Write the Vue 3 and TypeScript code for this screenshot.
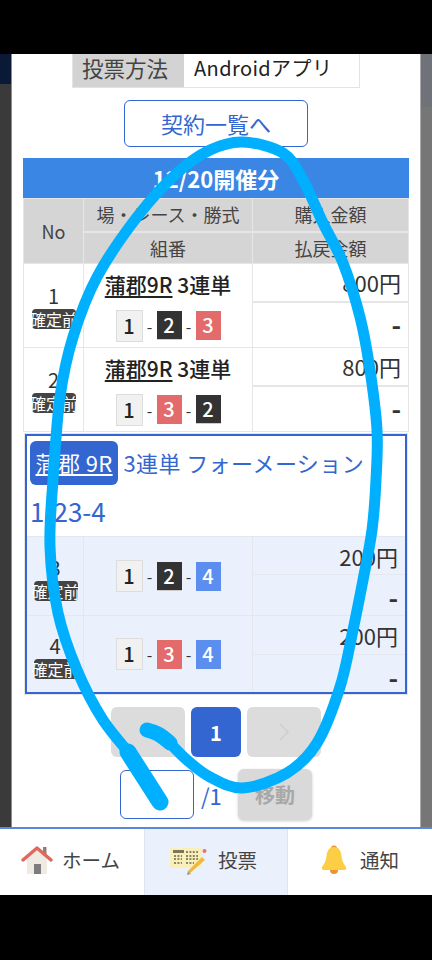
<script setup lang="ts">
type Box = { n: number; c: string }
const boxes = (...ns: number[]): Box[] => ns.map((n) => ({ n, c: 'b' + n }))

const plainRows = [
  { no: 1, nums: boxes(1, 2, 3) },
  { no: 2, nums: boxes(1, 3, 2) },
]
const formRows = [
  { no: 3, nums: boxes(1, 2, 4) },
  { no: 4, nums: boxes(1, 3, 4) },
]

const pts: [number, number][] = [
  [147, 730], [163, 737], [187, 760], [210, 777], [243, 788], [287, 773], [317, 743], [340, 687],
  [353, 630], [363, 580], [372, 530], [376, 480], [377, 430], [370, 370], [360, 317], [343, 263],
  [323, 223], [303, 180], [283, 153], [243, 142], [210, 150], [177, 173], [137, 217], [97, 277],
  [73, 337], [60, 397], [53, 480], [50, 547], [58, 613], [77, 670], [103, 720], [140, 767], [160, 802],
]
function spline(p: [number, number][]): string {
  let d = `M${p[0][0]} ${p[0][1]}`
  for (let i = 0; i < p.length - 1; i++) {
    const a = p[Math.max(i - 1, 0)]
    const b = p[i]
    const c = p[i + 1]
    const e = p[Math.min(i + 2, p.length - 1)]
    const c1x = b[0] + (c[0] - a[0]) / 6
    const c1y = b[1] + (c[1] - a[1]) / 6
    const c2x = c[0] - (e[0] - b[0]) / 6
    const c2y = c[1] - (e[1] - b[1]) / 6
    d += ` C${c1x.toFixed(1)} ${c1y.toFixed(1)} ${c2x.toFixed(1)} ${c2y.toFixed(1)} ${c[0]} ${c[1]}`
  }
  return d
}
const scribble = spline(pts)
</script>

<template>
  <div class="screen">
    <div class="bar-top"></div>
    <main class="page">
      <section class="modal">
        <div class="method">
          <div class="method-l">投票方法</div>
          <div class="method-v">Androidアプリ</div>
        </div>
        <a class="list-btn">契約一覧へ</a>

        <h2 class="date">12/20開催分</h2>
        <div class="grid head">
          <div class="no-h">No</div>
          <div>場・レース・勝式</div>
          <div>購入金額</div>
          <div>組番</div>
          <div>払戻金額</div>
        </div>

        <div v-for="r in plainRows" :key="r.no" class="grid row">
          <div class="no"><span>{{ r.no }}</span><b class="badge">確定前</b></div>
          <div class="mid">
            <div class="race"><u>蒲郡9R</u> 3連単</div>
            <div class="nums">
              <template v-for="(b, i) in r.nums" :key="i">
                <i v-if="i" class="dash">-</i>
                <span class="box" :class="b.c">{{ b.n }}</span>
              </template>
            </div>
          </div>
          <div class="amt a1">800円</div>
          <div class="amt a2">-</div>
        </div>

        <div class="form">
          <div class="form-title"><span class="pill"><u>蒲郡 9R</u></span> 3連単 フォーメーション</div>
          <div class="form-combo">1-23-4</div>
          <div v-for="r in formRows" :key="r.no" class="grid row frow">
            <div class="no"><span>{{ r.no }}</span><b class="badge">確定前</b></div>
            <div class="mid">
              <div class="nums">
                <template v-for="(b, i) in r.nums" :key="i">
                  <i v-if="i" class="dash">-</i>
                  <span class="box" :class="b.c">{{ b.n }}</span>
                </template>
              </div>
            </div>
            <div class="amt a1">200円</div>
            <div class="amt a2">-</div>
          </div>
        </div>

        <nav class="pager">
          <button class="pg off"></button>
          <button class="pg cur">1</button>
          <button class="pg off">
            <svg width="14" height="20" viewBox="0 0 14 20"><path d="m3 2 8 8-8 8" fill="none" stroke="#cfcfcf" stroke-width="1.6" /></svg>
          </button>
        </nav>
        <div class="jump">
          <span class="inp"></span>
          <span class="total">/1</span>
          <button class="go">移動</button>
        </div>
      </section>
    </main>

    <footer class="tabs">
      <div class="tab home">
        <svg width="32" height="30" viewBox="0 0 32 30">
          <rect x="22" y="2" width="3.5" height="9" fill="#8b8178" />
          <path d="M6 13 16 5l10 8v16H6z" fill="#efeae2" />
          <rect x="13" y="19" width="7" height="10" fill="#7d7d7d" />
          <path d="M2 15 16 3l14 12" fill="none" stroke="#e0685c" stroke-width="3.4" stroke-linecap="round" stroke-linejoin="round" />
        </svg>
        <span>ホーム</span>
      </div>
      <div class="tab on">
        <svg width="38" height="30" viewBox="0 0 38 30">
          <rect x="1" y="3" width="32" height="20" rx="1.5" fill="#f8efb9" />
          <rect x="4" y="5" width="11" height="3" fill="#7b7663" />
          <path d="M5 11h8M5 14h8M5 18h8M17 7h12M17 11h12M17 14h12M17 18h8" stroke="#8d8769" stroke-width="2" stroke-dasharray="2 1.4" />
          <path d="M20 29 18 30l1-4 14-14 3 3z" fill="#f0b93b" />
          <path d="m19 26 3 3-4 1z" fill="#a8a08c" />
          <circle cx="35.500" cy="6" r="2" fill="#e9746c" />
        </svg>
        <span>投票</span>
      </div>
      <div class="tab bell">
        <svg width="26" height="30" viewBox="0 0 26 30">
          <circle cx="13" cy="3.500" r="3" fill="#ee9131" />
          <circle cx="13" cy="25" r="4" fill="#ee9131" />
          <path d="M13 2c5 0 7 4 7.500 9 .4 4.500 2 7.500 4.500 11 .6 1 .2 3-2 3H3c-2.200 0-2.600-2-2-3 2.500-3.500 4.100-6.500 4.500-11C6 6 8 2 13 2z" fill="#fbce45" />
        </svg>
        <span>通知</span>
      </div>
    </footer>
    <div class="bar-bottom"></div>

    <svg class="scribble" width="432" height="960" viewBox="0 0 432 960">
      <g fill="none" stroke="#00b0ff" stroke-linecap="round" stroke-linejoin="round">
        <path :d="scribble" stroke-width="11" />
        <path d="M147 730 C155 732 160 734 170 743" stroke-width="15" />
        <path d="M128 752 L160 802" stroke-width="17" />
      </g>
    </svg>
  </div>
</template>

<style>
html, body { margin: 0; background: #000; }
</style>

<style scoped>
.screen {
  position: relative;
  width: 432px;
  height: 960px;
  display: flex;
  flex-direction: column;
  overflow: hidden;
  background: #000;
  font-family: "Noto Sans CJK JP", "Noto Sans", sans-serif;
  font-size: 20px;
  color: #333;
}
.bar-top { height: 54px; flex: none; }
.bar-bottom { height: 65px; flex: none; }
.page {
  height: 773px;
  flex: none;
  display: flex;
  justify-content: center;
  background:
    linear-gradient(to right, #0a1a36 0 12px, transparent 12px) 0 0 / 100% 30px no-repeat,
    linear-gradient(to right, transparent 50%, #6f7379 50%) 0 0 / 100% 53px no-repeat,
    linear-gradient(to right, #3a3a3a 0 50%, #767676 50%);
}
.modal {
  width: 410px;
  height: 773px;
  box-sizing: border-box;
  padding: 0 11px;
  overflow: hidden;
  background: #fff;
  border-left: 1px solid #8d8d8d;
  border-right: 1px solid #a9a9a9;
}
.method {
  display: flex;
  width: 288px;
  height: 34px;
  margin: 0 auto;
  border: 1px solid #e3e3e3;
  border-top: 0;
  box-sizing: border-box;
  line-height: 28px;
}
.method-l { width: 111px; padding-left: 9px; box-sizing: border-box; background: #d3d3d3; color: #444; font-size: 21.500px; }
.method-v { padding-left: 10px; letter-spacing: .4px; color: #222; }
.list-btn {
  display: block;
  width: 184px;
  height: 47px;
  box-sizing: border-box;
  margin: 12px auto 11px;
  border: 1px solid #3366d0;
  border-radius: 6px;
  color: #3366d0;
  font-size: 22px;
  line-height: 44px;
  text-align: center;
}
.date {
  margin: 0;
  height: 40px;
  background: #3a86e4;
  color: #fff;
  font-size: 22px;
  font-weight: 700;
  line-height: 40px;
  text-align: center;
}
.grid {
  display: grid;
  grid-template-columns: 59px 168px 1fr;
  gap: 2px 1px;
  padding: 1px;
  background: #e6e6e6;
}
.head { grid-template-rows: 32px 30px; }
.head div {
  background: #d5d5d5;
  text-align: center;
  line-height: 31px;
  color: #444;
  font-size: 18px;
}
.no-h { grid-row: 1 / 3; grid-column: 1; line-height: 64px !important; align-self: stretch; }
.head > div:nth-child(4) { grid-column: 2; grid-row: 2; }
.head > div:nth-child(5) { grid-column: 3; grid-row: 2; }
.row { grid-template-rows: 37px 44px; padding-top: 0; }
.row > div { background: #fff; }
.no {
  grid-row: 1 / 3;
  grid-column: 1;
  display: flex;
  flex-direction: column;
  align-items: center;
  justify-content: center;
  line-height: 24px;
  padding-top: 2px;
  box-sizing: border-box;
}
.badge {
  display: block;
  width: 44px;
  height: 20px;
  margin-left: 1px;
  background: #444;
  border-radius: 4px;
  color: #fff;
  font-size: 16px;
  font-weight: 400;
  line-height: 20px;
  white-space: nowrap;
  text-indent: -2px;
  margin-top: 1px;
}
.mid {
  grid-row: 1 / 3;
  grid-column: 2;
  display: flex;
  flex-direction: column;
  align-items: center;
  justify-content: center;
  gap: 10px;
  padding-bottom: 2px;
  box-sizing: border-box;
}
.race { font-size: 21px; font-weight: 500; line-height: 32px; color: #222; }
.race u { text-underline-offset: 3px; }
.frow .mid { gap: 0; padding-bottom: 0; }
.nums { display: flex; align-items: center; }
.dash { font-style: normal; font-size: 16px; color: #333; width: 14px; text-align: center; }
.box {
  width: 25px;
  height: 29px;
  box-sizing: border-box;
  text-align: center;
  font-weight: 500;
  font-size: 20px;
  line-height: 28px;
  color: #fff;
}
.b1 { width: 27px; height: 32px; border: 1px solid #ddd; background: #f1f1f1; color: #222; line-height: 30px; }
.b2 { background: #333; border: 1px solid #ccc; border-width: 0 0 1px; }
.b3 { background: #e46b6b; }
.b4 { background: #5b8eef; }
.amt { grid-column: 3; text-align: right; padding-right: 7px; color: #333; }
.a1 { grid-row: 1; font-size: 22px; line-height: 37px; }
.a2 { grid-row: 2; font-size: 26px; font-weight: 700; line-height: 42px; }
.form {
  margin: 2px 2px 0;
  border: 2px solid #3366d0;
  outline: 1px solid #e6e6e6;
  background: #fff;
  color: #3366d0;
}
.form-title {
  padding: 5px 3px 0;
  height: 44px;
  line-height: 43px;
  font-size: 22px;
  white-space: nowrap;
  letter-spacing: .4px;
}
.pill {
  display: inline-block;
  padding: 0 5.5px;
  height: 44px;
  background: #3366d0;
  color: #fff;
  border-radius: 6px;
}
.form-combo { padding-left: 3px; font-size: 26px; line-height: 52px; height: 51px; }
.frow {
  grid-template-columns: 56px 168px 1fr;
  grid-template-rows: 38px 37px;
  gap: 1px;
  padding: 0;
  background: #e4e8ee;
}
.frow:nth-child(3) { grid-template-rows: 37px 40px; padding: 1px 0; }
.frow > div { background: #eaf1fd; color: #333; }
.frow .a1 { line-height: 38px; }
.frow .a2 { line-height: 44px; }
.frow .no { padding-top: 4px; }
.pager { display: flex; justify-content: center; gap: 6px; margin-top: 13px; }
.pg {
  height: 50px;
  border: 0;
  border-radius: 6px;
  padding: 0;
  display: flex;
  align-items: center;
  justify-content: center;
  font: inherit;
}
.off { width: 74px; background: #dcdcdc; }
.cur { width: 50px; background: #3366d0; color: #fff; font-weight: 700; }
.jump { display: flex; align-items: center; margin: 12px 0 0 97px; color: #3366d0; }
.inp {
  width: 74px;
  height: 49px;
  box-sizing: border-box;
  border: 1px solid #3366d0;
  border-radius: 6px;
}
.total { width: 44px; padding-left: 7px; box-sizing: border-box; font-size: 22px; }
.go {
  width: 74px;
  height: 51px;
  border: 0;
  border-radius: 6px;
  background: #d9d9d9;
  color: #a8a8a8;
  font: inherit;
  font-weight: 700;
  box-shadow: 0 1px 3px rgba(0, 0, 0, .2);
}
.tabs {
  height: 68px;
  flex: none;
  box-sizing: border-box;
  display: grid;
  grid-template-columns: repeat(3, 144px);
  border-top: 2px solid #5a86dc;
  background: #fff;
}
.tab {
  display: flex;
  align-items: center;
  justify-content: center;
  gap: 11px;
  padding-bottom: 5px;
  box-sizing: border-box;
  color: #444;
  font-size: 19.500px;
}
.tab.home { gap: 9px; padding-right: 3px; }
.tab.on {
  background: #eaf1fd;
  border: solid #dfe5ef;
  border-width: 0 1px;
  padding-right: 6px;
}
.tab.bell { gap: 13px; }
.scribble { position: absolute; left: 0; top: 0; pointer-events: none; }
</style>
